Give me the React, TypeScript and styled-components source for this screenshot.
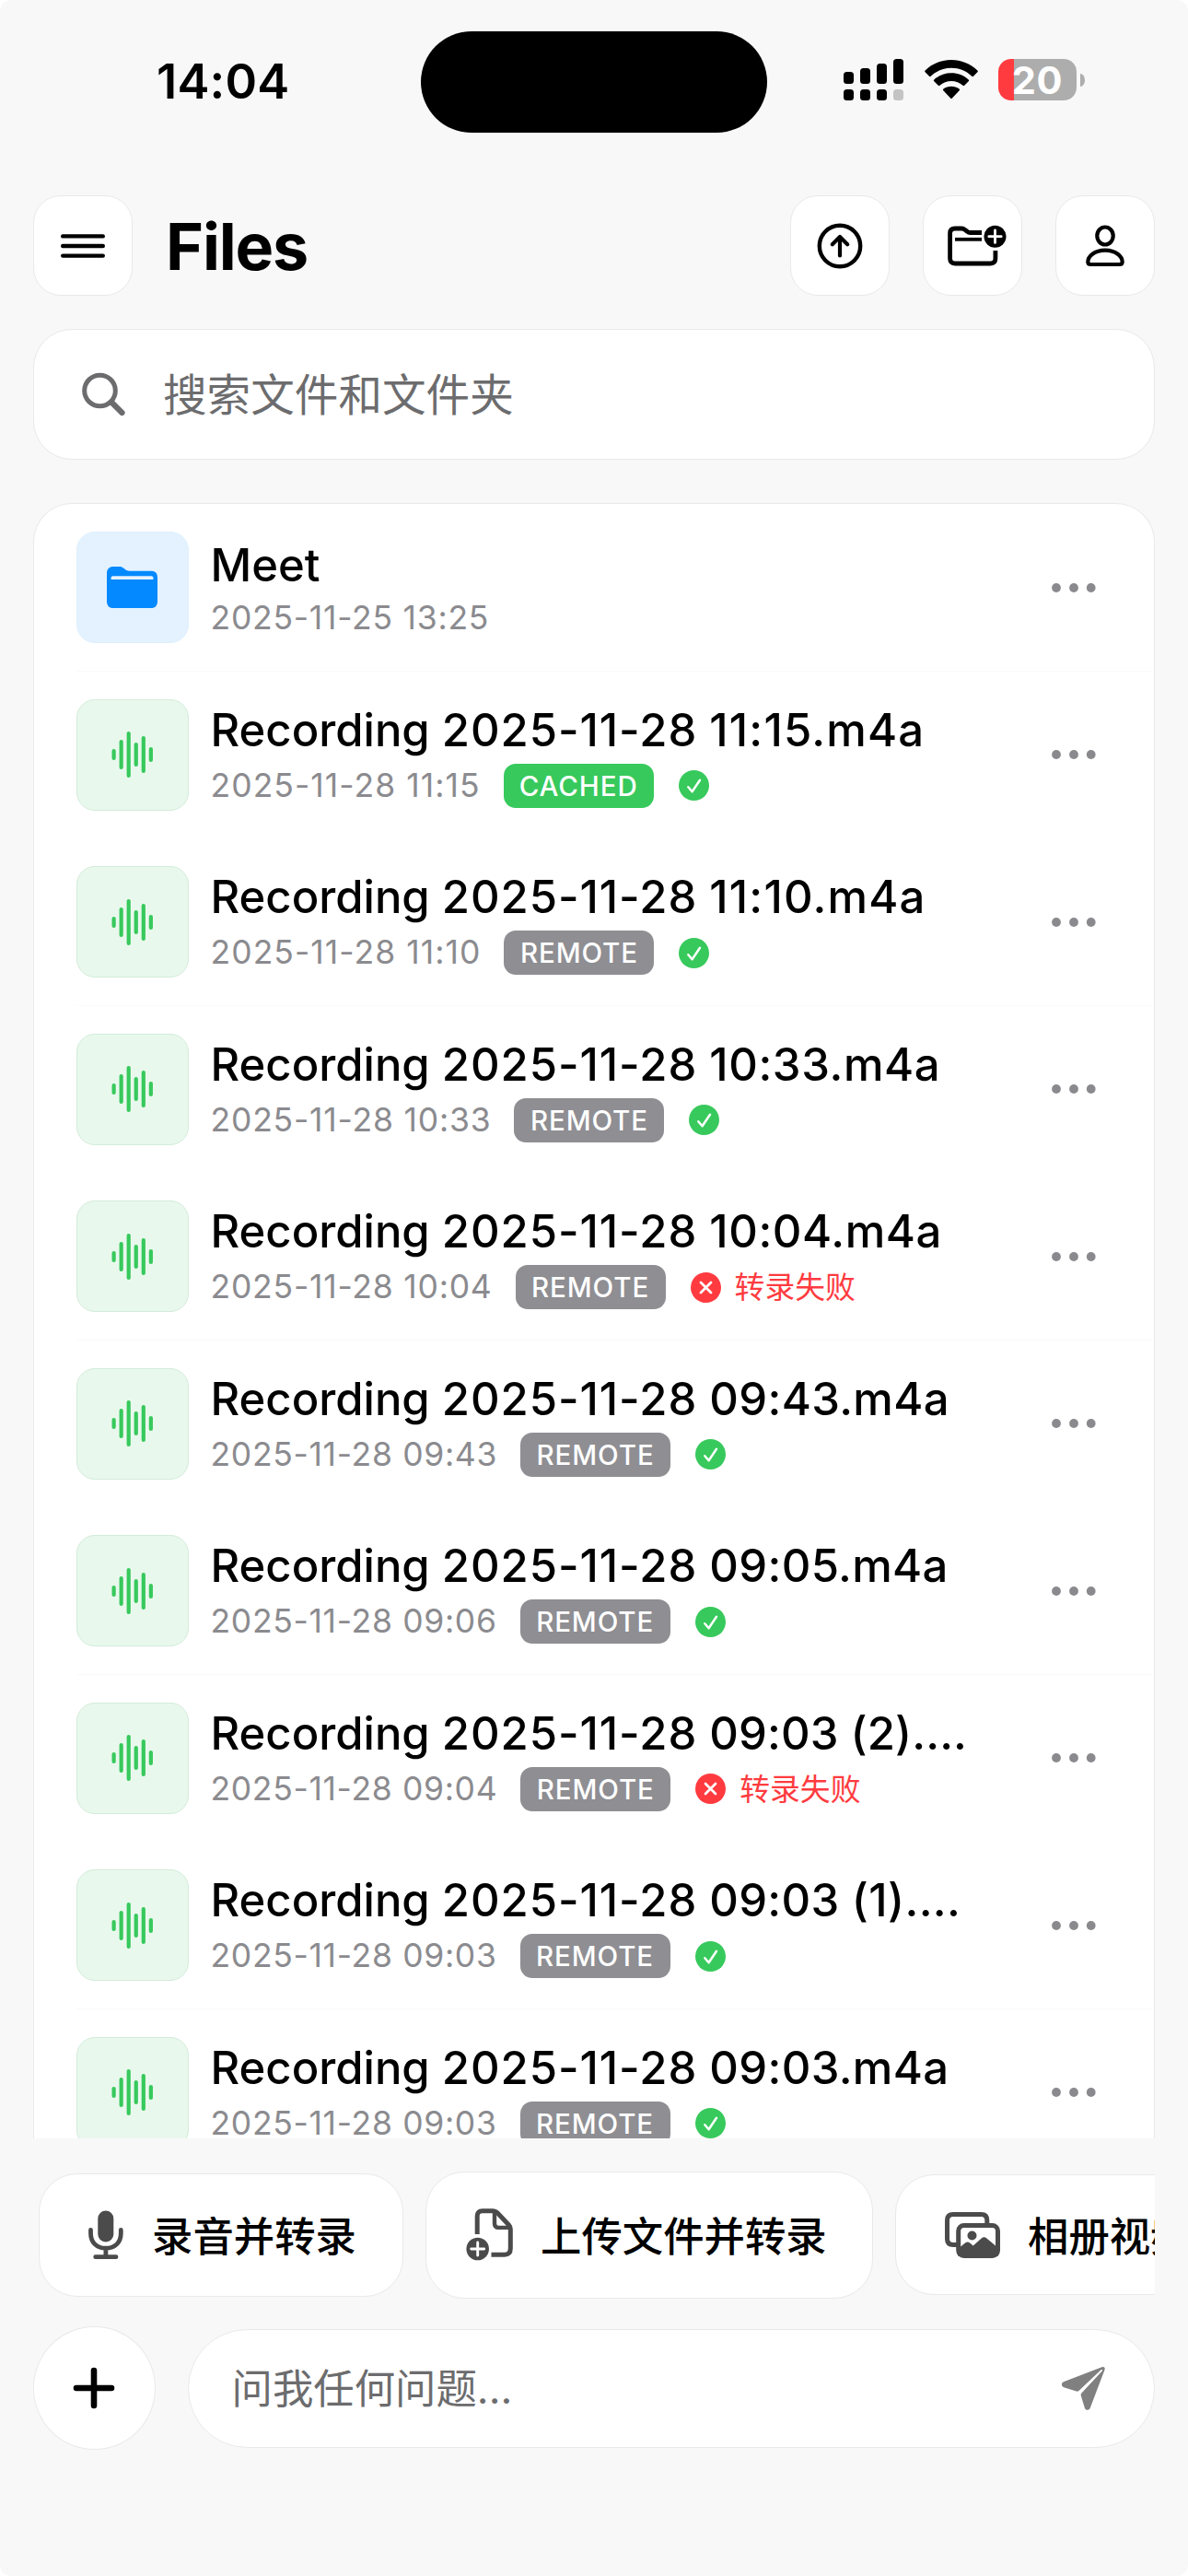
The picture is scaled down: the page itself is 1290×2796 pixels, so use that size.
import React from "react";
import styled, { createGlobalStyle, css } from "styled-components";

const Global = createGlobalStyle`
  *, *::before, *::after { box-sizing: border-box; }
  html, body { margin: 0; padding: 0; background: #ffffff; }
  body {
    font-family: Inter, "Noto Sans CJK SC", sans-serif;
    color: #000;
    -webkit-font-smoothing: antialiased;
  }
`;

const Screen = styled.main`
  width: 1290px;
  height: 2796px;
  overflow: hidden;
  background: #f8f8f8;
  border-radius: 12px;
  display: flex;
  flex-direction: column;
`;

/* ---------- status bar ---------- */

const StatusBar = styled.div`
  height: 212px;
  flex: none;
  display: grid;
  grid-template-columns: 457px 376px 1fr;
  align-items: start;
`;

const Clock = styled.div`
  padding: 56px 0 0 170px;
  font-size: 52.5px;
  line-height: 64px;
  font-weight: 600;
  letter-spacing: 0.2px;
`;

const Island = styled.div`
  margin-top: 33.5px;
  height: 110.5px;
  border-radius: 56px;
  background: #000;
`;

const Indicators = styled.div`
  padding: 64px 0 0 83px;
  display: flex;
  align-items: flex-start;
`;

const WifiSlot = styled.div`
  margin: 0 22px;
  display: flex;
`;

const Battery = styled.div`
  width: 85px;
  height: 45px;
  border-radius: 14px;
  background: linear-gradient(90deg, #ff3b40 0 17px, #adadad 17px);
  color: #fff;
  font-weight: 700;
  font-size: 41.5px;
  line-height: 46px;
  text-align: center;
  letter-spacing: 0.8px;
`;

const BatteryCap = styled.div`
  width: 5px;
  height: 14px;
  margin: 16px 0 0 4px;
  background: #adadad;
  border-radius: 0 5px 5px 0 / 0 7px 7px 0;
`;

/* ---------- header ---------- */

const Header = styled.header`
  flex: none;
  height: 109px;
  margin: 0 36px;
  display: flex;
  align-items: center;
`;

const surface = css`
  background: #fff;
  border: 1px solid #e9e9e9;
`;

const SquareButton = styled.button<{ $shift?: number }>`
  ${surface}
  width: 108px;
  height: 109px;
  padding: 0 0 0 ${(p) => p.$shift ?? 0}px;
  border-radius: 30px;
  display: flex;
  align-items: center;
  justify-content: center;
  color: #000;
`;

const PageTitle = styled.h1`
  margin: 3px 0 0 36px;
  flex: 1;
  font-size: 70px;
  line-height: 84px;
  font-weight: 700;
  letter-spacing: -1.2px;
`;

const HeaderActions = styled.div`
  display: flex;
  gap: 36px;
`;

/* ---------- search ---------- */

const SearchBar = styled.div`
  ${surface}
  flex: none;
  height: 142px;
  margin: 36px 36px 0;
  padding-left: 52px;
  border-radius: 42px;
  display: flex;
  align-items: center;
  gap: 41px;
`;

const Placeholder = styled.span<{ $size: number; $drop?: number }>`
  padding-top: ${(p) => p.$drop ?? 0}px;
  font-size: ${(p) => p.$size}px;
  line-height: 1.3;
  color: #6c6c6e;
`;

/* ---------- list ---------- */

const ListCard = styled.section`
  flex: none;
  height: 1775px;
  margin: 47px 36px 0;
  overflow: hidden;
  background: #fff;
  border: 1px solid #e9e9e9;
  border-bottom: 0;
  border-radius: 42px 42px 0 0;
`;

const Row = styled.div`
  height: 181.5px;
  margin-left: 46px;
  padding-right: 63px;
  display: flex;
  align-items: center;

  &:nth-child(odd) {
    box-shadow: inset 0 -1px #fafafa;
  }
`;

const Thumb = styled.div<{ $folder?: boolean }>`
  width: 121.5px;
  height: 121px;
  flex: none;
  border-radius: 20px;
  display: flex;
  align-items: center;
  justify-content: center;
  background: ${(p) => (p.$folder ? "#e4f2ff" : "#e9f8ed")};
  border: 1px solid ${(p) => (p.$folder ? "#deeffb" : "#d3ecda")};
`;

const Details = styled.div`
  flex: 1;
  min-width: 0;
  margin-left: 24px;
  height: 121px;
`;

const Name = styled.div<{ $folder?: boolean }>`
  margin-top: ${(p) => (p.$folder ? 7 : 4)}px;
  font-size: 49px;
  line-height: 60px;
  font-weight: 500;
  white-space: nowrap;
`;

const Tracked = styled.span<{ $track: number }>`
  letter-spacing: ${(p) => p.$track}px;
`;

const Meta = styled.div<{ $folder?: boolean }>`
  display: flex;
  align-items: center;
  height: 48px;
  margin-top: ${(p) => (p.$folder ? 3 : 6)}px;
`;

const Stamp = styled.span<{ $track: number }>`
  font-size: 35.5px;
  line-height: 48px;
  color: #8b8b8f;
  letter-spacing: ${(p) => p.$track}px;
  white-space: nowrap;
`;

const Badge = styled.span<{ $tone: "green" | "gray" }>`
  width: 163px;
  height: 48px;
  margin-left: 25px;
  border-radius: 13px;
  background: ${(p) => (p.$tone === "green" ? "#37c95c" : "#8e8e93")};
  color: #fff;
  font-size: 29.5px;
  line-height: 48px;
  font-weight: 500;
  letter-spacing: 0.9px;
  text-align: center;
`;

const StateIcon = styled.span`
  display: flex;
  margin-left: 27px;
`;

const Failure = styled.span`
  margin-left: 15px;
  font-size: 32.8px;
  line-height: 48px;
  color: #ff3b40;
`;

/* ---------- bottom bar ---------- */

const Chips = styled.div`
  flex: none;
  height: 139px;
  margin: 35px 36px 0;
  padding-left: 6px;
  overflow: hidden;
  display: flex;
  align-items: center;
  gap: 24px;
`;

const Chip = styled.button<{ $w: number; $h: number; $lead: number; $gap: number }>`
  ${surface}
  flex: none;
  width: ${(p) => p.$w}px;
  height: ${(p) => p.$h}px;
  padding: 0 0 0 ${(p) => p.$lead}px;
  border-radius: 42px;
  display: flex;
  align-items: center;
  gap: ${(p) => p.$gap}px;
  color: #4b4b4b;
`;

const ChipLabel = styled.span`
  padding-top: 5px;
  font-family: Inter, "Noto Sans CJK SC", sans-serif;
  font-size: 44.4px;
  line-height: 60px;
  font-weight: 500;
  color: #000;
  white-space: nowrap;
`;

const Composer = styled.div`
  flex: none;
  height: 134px;
  margin: 30px 36px 0;
  display: flex;
  align-items: center;
  gap: 35px;
`;

const AddButton = styled.button`
  ${surface}
  width: 132.5px;
  height: 134px;
  padding: 0;
  flex: none;
  border-radius: 50%;
  display: flex;
  align-items: center;
  justify-content: center;
`;

const AskField = styled.div`
  ${surface}
  flex: 1;
  height: 129px;
  padding: 0 53px 0 47px;
  border-radius: 65px;
  display: flex;
  align-items: center;
  justify-content: space-between;
`;

/* ---------- drawings ---------- */

const Cellular = () => (
  <svg width="66" height="45" viewBox="0 0 66 45">
    <rect x="0" y="14" width="11" height="13" rx="3.5" />
    <rect x="18" y="10" width="11" height="17" rx="3.5" />
    <rect x="36" y="5" width="11" height="22" rx="3.5" />
    <rect x="54" y="0" width="11" height="27" rx="3.5" />
    <rect x="0" y="33" width="11" height="12" rx="3.5" />
    <rect x="18" y="33" width="11" height="12" rx="3.5" />
    <rect x="36" y="33" width="11" height="12" rx="3.5" />
    <rect x="54" y="33" width="11" height="12" rx="3.5" fill="#c4c4c4" />
  </svg>
);

const Wifi = () => (
  <svg width="58" height="45" viewBox="0 0 58 45">
    <path d="M0.6 14.2a1.2 1.2 0 0 1 0-1.7C8.500 5 18.400 1 29 1s20.500 4 28.400 11.500a1.200 1.200 0 0 1 0 1.700l-4.400 4.500a1.200 1.200 0 0 1-1.700 0C45.200 13 37.400 9.800 29 9.800S12.800 13 6.700 18.700a1.200 1.200 0 0 1-1.700 0z" />
    <path d="M10.300 24.200a1.200 1.200 0 0 1 0-1.800C15.500 17.800 22 15.300 29 15.300s13.500 2.500 18.700 7.100a1.200 1.200 0 0 1 0 1.800l-4.500 4.500a1.300 1.300 0 0 1-1.700 0C38 25.700 33.700 24 29 24s-9 1.700-12.500 4.700a1.300 1.300 0 0 1-1.700 0z" />
    <path d="M20.300 34.300a1.200 1.200 0 0 1 .1-1.800C22.800 30.700 25.800 29.700 29 29.700s6.200 1 8.600 2.800a1.200 1.200 0 0 1 .1 1.800l-7.800 8.200a1.200 1.200 0 0 1-1.800 0z" />
  </svg>
);

const MenuIcon = () => (
  <svg width="48" height="28" viewBox="0 0 48 28" stroke="#000" strokeWidth="4.400" strokeLinecap="round">
    <path d="M2.200 3.400H45.800M2.200 14H45.800M2.200 24.600H45.800" />
  </svg>
);

const UploadIcon = () => (
  <svg width="50" height="50" viewBox="0 0 50 50" fill="none" stroke="#000" strokeLinecap="round" strokeLinejoin="round">
    <circle cx="25" cy="25" r="22.200" strokeWidth="4.400" />
    <path d="M25 35.500V15.500M16.800 23.200L25 15l8.200 8.200" strokeWidth="4.200" />
  </svg>
);

const NewFolderIcon = () => (
  <svg width="64" height="46" viewBox="0 0 64 46" fill="none" stroke="#000" strokeWidth="4.800">
    <path d="M37 8.500H24.500c-1.400 0-2.300-.4-3.300-1.300l-2.400-1.700C17.700 4.500 16.800 4 15.400 4H8C4.400 4 2.600 5.800 2.600 9.200V36.600c0 3.600 1.800 5.400 5.400 5.400H46.500c3.600 0 5.400-1.800 5.400-5.400V28" />
    <path d="M8 15.800H37" strokeWidth="3.800" />
    <circle cx="51.500" cy="12.700" r="12" fill="#000" stroke="none" />
    <path d="M51.500 6V19.400M44.800 12.700H58.200" stroke="#fff" strokeWidth="2.800" strokeLinecap="round" />
  </svg>
);

const PersonIcon = () => (
  <svg width="42" height="46" viewBox="0 0 42 46" fill="none" stroke="#000" strokeWidth="4.200">
    <ellipse cx="21" cy="12" rx="8.700" ry="9.500" />
    <path d="M5.500 43H36.500c2 0 3.200-1 3.200-2.800C39.700 34.400 32.600 27.600 21 27.600S2.300 34.400 2.300 40.200c0 1.800 1.200 2.800 3.200 2.800z" />
  </svg>
);

const SearchIcon = () => (
  <svg width="47" height="48" viewBox="0 0 47 48" fill="none" stroke="#6c6c6e" strokeLinecap="round">
    <circle cx="19.500" cy="20" r="16.800" strokeWidth="5" />
    <path d="M32 32.500L43.500 44" strokeWidth="6.200" />
  </svg>
);

const FolderIcon = () => (
  <svg width="55" height="45" viewBox="0 0 55 45">
    <path fill="#0589ff" d="M0 7.500C0 2.500 2.600 0 7.500 0h6c2 0 3.400.5 4.800 1.700l2 1.600c1.200 1 2.200 1.400 4 1.400H48c4.600 0 7 2.500 7 7V37.500c0 5-2.500 7.500-7 7.500H7C2.500 45 0 42.500 0 37.500z" />
    <path fill="#e4f2ff" d="M4.600 12.200c0-1.200.8-2 2-2H48.400c1.200 0 2 .8 2 2V14H4.600z" />
  </svg>
);

const WAVE_HEIGHTS = [12, 32, 50, 26, 40, 16];

const WaveIcon = () => (
  <svg width="46" height="50" viewBox="0 0 46 50" fill="#37c95c">
    {WAVE_HEIGHTS.map((h, i) => (
      <rect key={i} x={0.5 + i * 8.05} y={25 - h / 2} width="4.200" height={h} rx="2.100" />
    ))}
  </svg>
);

const CheckIcon = () => (
  <svg width="33" height="33" viewBox="0 0 33 33" fill="none">
    <circle cx="16.500" cy="16.500" r="16.500" fill="#37c95c" />
    <path d="M10.300 18.200L14.600 23.200 23 10.800" stroke="#fff" strokeWidth="2.500" strokeLinecap="round" strokeLinejoin="round" />
  </svg>
);

const CrossIcon = () => (
  <svg width="33" height="33" viewBox="0 0 33 33" fill="none">
    <circle cx="16.500" cy="16.500" r="16.500" fill="#ff3b40" />
    <path d="M11 11L22 22M22 11L11 22" stroke="#fff" strokeWidth="2.700" strokeLinecap="round" />
  </svg>
);

const MoreIcon = () => (
  <svg width="48" height="10" viewBox="0 0 48 10" fill="#8a8a8e">
    <circle cx="5" cy="5" r="4.900" />
    <circle cx="24" cy="5" r="4.900" />
    <circle cx="42.700" cy="5" r="4.900" />
  </svg>
);

const MicIcon = () => (
  <svg width="38" height="54" viewBox="0 0 38 54" fill="none" stroke="#4b4b4b" strokeLinecap="round">
    <rect x="10.300" y="0.500" width="17" height="34" rx="8.500" fill="#4b4b4b" stroke="none" />
    <path d="M2.500 21.500V25C2.500 35 9 41.200 18.900 41.200S35.300 35 35.300 25V21.500M18.900 41.500V50M7.700 50.700H30" strokeWidth="4.800" />
  </svg>
);

const FileAddIcon = () => (
  <svg width="52" height="57" viewBox="0 0 52 57" fill="none" stroke="#4b4b4b" strokeWidth="5">
    <path d="M12.200 28V8.500C12.200 4.700 14 2.800 17.800 2.800H29.500c1.800 0 3 .5 4.300 1.800L46.500 18c1.300 1.400 1.800 2.600 1.800 4.500V43.500c0 4.600-2 6.700-6.500 6.700H27.500" />
    <path d="M31 3.500V16.500c0 3 1.400 4.400 4.400 4.400H48" strokeWidth="4.400" />
    <circle cx="12.700" cy="44" r="12.300" fill="#4b4b4b" stroke="none" />
    <path d="M12.700 37V51M5.700 44H19.700" stroke="#fff" strokeWidth="2.900" strokeLinecap="round" />
  </svg>
);

const PhotosIcon = () => (
  <svg width="60" height="50" viewBox="0 0 60 50" fill="none" stroke="#4b4b4b" strokeWidth="5">
    <path d="M13 35.500H9c-4.300 0-6.500-2-6.500-6.200V9C2.500 4.700 4.700 2.600 9 2.600H39.500c4.300 0 6.300 2 6.300 6.400V13" />
    <rect x="14.700" y="14.500" width="42.800" height="33" rx="6" />
    <path d="M14 40l8-6.500c1.800-1.500 3.500-1.500 5.200 0l3.500 3 9-8c1.900-1.700 3.800-1.700 5.700 0L58 39v8.500H14z" fill="#4b4b4b" stroke="none" />
    <circle cx="29.500" cy="25.500" r="5" fill="#4b4b4b" stroke="none" />
  </svg>
);

const PlusIcon = () => (
  <svg width="46" height="46" viewBox="0 0 46 46" stroke="#000" strokeWidth="6.600" strokeLinecap="round">
    <path d="M23 4V42M4 23H42" />
  </svg>
);

const SendIcon = () => (
  <svg width="47" height="47" viewBox="0 0 47 47">
    <path fill="#808080" d="M1.800 16.200L43.500 .3C45.800 -.4 47.300 1 46.500 3.300L30.800 44.600C29.700 47.700 25.700 47.500 24.800 44.400L20.800 31.200C20.500 30.100 20.600 29.500 21.400 28.600L44 4.300C44.300 3.400 43.700 2.700 42.800 3L18.400 26C17.600 26.800 16.900 26.900 15.800 26.600L2.200 22.200C-.8 21.200 -.7 17.200 1.800 16.200z" />
  </svg>
);

/* ---------- data ---------- */

type Recording = {
  time: string;
  timeTrack: number;
  stamp: string;
  stampTrack: number;
  cached?: boolean;
  failed?: boolean;
};

const RECORDINGS: Recording[] = [
  { time: "11:15.m4a", timeTrack: 1.2, stamp: "2025-11-28 11:15", stampTrack: 1.05, cached: true },
  { time: "11:10.m4a", timeTrack: 1.2, stamp: "2025-11-28 11:10", stampTrack: 1.05 },
  { time: "10:33.m4a", timeTrack: 0.6, stamp: "2025-11-28 10:33", stampTrack: 0.8 },
  { time: "10:04.m4a", timeTrack: 0.6, stamp: "2025-11-28 10:04", stampTrack: 0.78 },
  { time: "09:43.m4a", timeTrack: 0.35, stamp: "2025-11-28 09:43", stampTrack: 0.68 },
  { time: "09:05.m4a", timeTrack: 0.35, stamp: "2025-11-28 09:06", stampTrack: 0.68 },
  { time: "09:03 (2)....", timeTrack: 0.1, stamp: "2025-11-28 09:04", stampTrack: 0.66 },
  { time: "09:03 (1)....", timeTrack: 0.3, stamp: "2025-11-28 09:03", stampTrack: 0.68 },
  { time: "09:03.m4a", timeTrack: 0.35, stamp: "2025-11-28 09:03", stampTrack: 0.68 },
].map((r) => ({ ...r, failed: r.time.startsWith("10:04") || r.time.includes("(2)") }));

const RecordingRow = ({ time, timeTrack, stamp, stampTrack, cached, failed }: Recording) => (
  <Row>
    <Thumb>
      <WaveIcon />
    </Thumb>
    <Details>
      <Name>
        Recording <Tracked $track={0.95}>2025-11-28</Tracked> <Tracked $track={timeTrack}>{time}</Tracked>
      </Name>
      <Meta>
        <Stamp $track={stampTrack}>{stamp}</Stamp>
        <Badge $tone={cached ? "green" : "gray"}>{cached ? "CACHED" : "REMOTE"}</Badge>
        <StateIcon>{failed ? <CrossIcon /> : <CheckIcon />}</StateIcon>
        {failed && <Failure>转录失败</Failure>}
      </Meta>
    </Details>
    <MoreIcon />
  </Row>
);

export default function App() {
  return (
    <>
      <Global />
      <Screen>
        <StatusBar>
          <Clock>14:04</Clock>
          <Island />
          <Indicators>
            <Cellular />
            <WifiSlot>
              <Wifi />
            </WifiSlot>
            <Battery>20</Battery>
            <BatteryCap />
          </Indicators>
        </StatusBar>

        <Header>
          <SquareButton aria-label="Menu">
            <MenuIcon />
          </SquareButton>
          <PageTitle>Files</PageTitle>
          <HeaderActions>
            <SquareButton aria-label="Upload">
              <UploadIcon />
            </SquareButton>
            <SquareButton aria-label="New folder" $shift={9}>
              <NewFolderIcon />
            </SquareButton>
            <SquareButton aria-label="Account">
              <PersonIcon />
            </SquareButton>
          </HeaderActions>
        </Header>

        <SearchBar>
          <SearchIcon />
          <Placeholder $size={47.6} $drop={1}>搜索文件和文件夹</Placeholder>
        </SearchBar>

        <ListCard>
          <Row>
            <Thumb $folder>
              <FolderIcon />
            </Thumb>
            <Details>
              <Name $folder>Meet</Name>
              <Meta $folder>
                <Stamp $track={0.75}>2025-11-25 13:25</Stamp>
              </Meta>
            </Details>
            <MoreIcon />
          </Row>
          {RECORDINGS.map((r) => (
            <RecordingRow key={r.time} {...r} />
          ))}
        </ListCard>

        <Chips>
          <Chip $w={396} $h={134} $lead={53} $gap={31}>
            <MicIcon />
            <ChipLabel>录音并转录</ChipLabel>
          </Chip>
          <Chip $w={486} $h={138} $lead={43} $gap={29}>
            <FileAddIcon />
            <ChipLabel>上传文件并转录</ChipLabel>
          </Chip>
          <Chip $w={500} $h={131} $lead={53} $gap={30}>
            <PhotosIcon />
            <ChipLabel>相册视频并转录</ChipLabel>
          </Chip>
        </Chips>

        <Composer>
          <AddButton aria-label="Add">
            <PlusIcon />
          </AddButton>
          <AskField>
            <Placeholder $size={44.4} $drop={3}>问我任何问题...</Placeholder>
            <SendIcon />
          </AskField>
        </Composer>
      </Screen>
    </>
  );
}
